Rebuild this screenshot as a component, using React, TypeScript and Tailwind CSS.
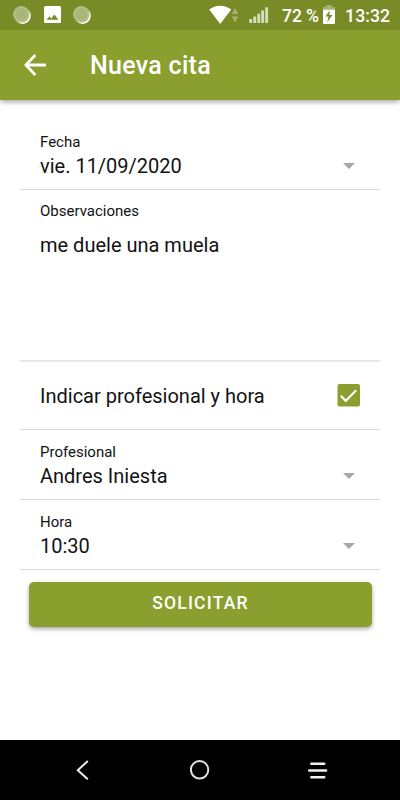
import type { ComponentProps, ReactNode } from 'react'
import { clsx } from 'clsx'

const SyncIcon = (props: ComponentProps<'svg'>) => (
  <svg width="18" height="18" viewBox="0 0 18 18" fill="none" {...props}>
    <circle cx="9.6" cy="9.7" r="8.2" fill="#fff" />
    <circle cx="8.3" cy="8.3" r="8.3" fill="#a9b677" />
    <circle cx="8.3" cy="8.3" r="6.9" stroke="#c3cc9f" strokeWidth="1.6" strokeDasharray="0.9 1.1" />
  </svg>
)

const PictureIcon = () => (
  <svg width="17" height="17" viewBox="0 0 17 17">
    <rect width="17" height="17" rx="1.6" fill="#fff" />
    <path d="M2.6 13.8 5.3 10.2 7.3 12.5 10.4 8.5 14.4 13.8Z" fill="#798b27" />
  </svg>
)

const StatusBar = () => (
  <div className="relative z-20 flex h-[30px] shrink-0 items-start bg-[#798b27] text-white">
    <div className="flex pl-[13px] pt-[6px]">
      <SyncIcon />
      <div className="ml-[13px]">
        <PictureIcon />
      </div>
      <SyncIcon className="ml-[12px]" />
    </div>
    <div className="ml-auto flex pr-[10px]">
      <svg className="mt-[5px]" width="30" height="20" viewBox="0 0 30 20">
        <path d="M0.2 4.6C6.2-0.7 16.2-0.7 22.2 4.6L11.2 19Z" fill="#fff" />
        <path d="M22.8 9 26 3 29.2 9ZM22.8 11.6 26 17.6 29.2 11.6Z" fill="#a6b270" />
      </svg>
      <svg className="ml-[10px] mt-[7px]" width="20" height="16" viewBox="0 0 20 16" fill="#d6dcbc">
        <path d="M0.3 12h2.9v4H0.3ZM4.3 9.6h2.9v6.4H4.3ZM8.3 6.7h2.9v9.3H8.3ZM12.2 3.4h2.9v12.6h-2.9ZM16.2 0.3h2.9v15.7h-2.9Z" />
      </svg>
      <span className="ml-[13px] mt-[4px] w-[40px] whitespace-nowrap text-[17.5px] font-medium leading-6 tracking-[-0.1px]">
        72 %
      </span>
      <svg className="ml-[1px] mt-[5px]" width="12" height="19" viewBox="0 0 12 19">
        <path d="M0 5V2h3.3V0h5.4v2H12v3Z" fill="#a6b270" />
        <path d="M0 4.8h12V18a1 1 0 0 1-1 1H1a1 1 0 0 1-1-1Z" fill="#fff" />
        <path d="M6.7 5.5 2.4 11.4h3L4.3 17.2 9.4 9.9H6.4Z" fill="#798b27" />
      </svg>
      <span className="ml-[10px] mt-[4px] whitespace-nowrap text-[17.7px] font-medium leading-6">
        13:32
      </span>
    </div>
  </div>
)

const Header = () => (
  <header className="z-10 flex h-[70px] shrink-0 items-center bg-[#8a9f2d] text-white shadow-[0_2px_5px_rgba(0,0,0,0.35)]">
    <svg className="ml-6" width="23" height="22" viewBox="0 0 23 22" fill="none" stroke="#fff" strokeWidth="2.8">
      <path d="M11.3 1 1.9 11l9.4 10M2 11h20" />
    </svg>
    <h1 className="ml-[43px] pt-px text-[25px] font-medium leading-[30px] tracking-[0.3px]">Nueva cita</h1>
  </header>
)

interface FieldProps extends ComponentProps<'div'> {
  label: string
  children: ReactNode
}

const SelectField = ({ label, children, className, ...props }: FieldProps) => (
  <div
    className={clsx('flex h-[70px] items-end justify-between border-b border-[#d9d9d9] pl-5 pr-[25px]', className)}
    {...props}
  >
    <div className="pb-[11px]">
      <p className="text-[15px] leading-5">{label}</p>
      <p className="mt-[2px] text-[20px] leading-6">{children}</p>
    </div>
    <svg className="mb-5" width="12" height="6" viewBox="0 0 12 6">
      <path d="M0 0h12L6 6Z" fill="#a8a8a8" />
    </svg>
  </div>
)

const NavBar = () => (
  <nav className="flex h-[60px] shrink-0 items-start bg-black pt-[19px]">
    <svg className="ml-[76px]" width="13" height="21" viewBox="0 0 13 21" fill="none" stroke="#eee" strokeWidth="2">
      <path d="M11.8 2 1.8 11.3l10 9" />
    </svg>
    <svg className="ml-[101px]" width="20" height="22" viewBox="0 0 20 22" fill="none" stroke="#e2e2e2" strokeWidth="2">
      <circle cx="9.6" cy="10.8" r="8.7" />
    </svg>
    <svg className="ml-[98px]" width="20" height="22" viewBox="0 0 20 22" stroke="#f2f2f2" strokeWidth="2.6" strokeLinecap="round">
      <path d="M3.4 4.7h12.8M1.2 11.5h16.8M3.4 18.2h12.8" />
    </svg>
  </nav>
)

export default function App() {
  return (
    <div className="flex h-[800px] w-[400px] flex-col overflow-hidden bg-white font-[Roboto,sans-serif] text-[#121212]">
      <StatusBar />
      <Header />

      <main className="flex-1 px-5 pt-5">
        <SelectField label="Fecha">vie. 11/09/2020</SelectField>

        <div className="h-[172px] border-b-2 border-[#e8e8e8] pl-5 pt-[11px]">
          <p className="text-[15px] leading-5">Observaciones</p>
          <p className="mt-[12px] text-[20px] leading-6">me duele una muela</p>
        </div>

        <div className="flex h-[68px] items-center justify-between border-b border-[#d9d9d9] pl-5 pr-5">
          <span className="text-[20px] leading-6">Indicar profesional y hora</span>
          <svg width="23" height="23" viewBox="0 0 23 23" fill="none">
            <rect x="0.5" width="22.5" height="22.5" rx="2" fill="#8a9f2d" />
            <path d="M3.9 11.7 8.7 17 19.1 6.3" stroke="#fff" strokeWidth="2.1" />
          </svg>
        </div>

        <SelectField label="Profesional">Andres Iniesta</SelectField>
        <SelectField label="Hora">10:30</SelectField>

        <button
          type="button"
          className="ml-[9px] mt-3 block h-[45px] w-[343px] rounded-[5px] bg-[#8a9f2d] pb-[3px] text-[17.5px] font-medium tracking-[1.2px] text-white shadow-[0_2px_4px_rgba(0,0,0,0.35)]"
        >
          SOLICITAR
        </button>
      </main>

      <NavBar />
    </div>
  )
}
